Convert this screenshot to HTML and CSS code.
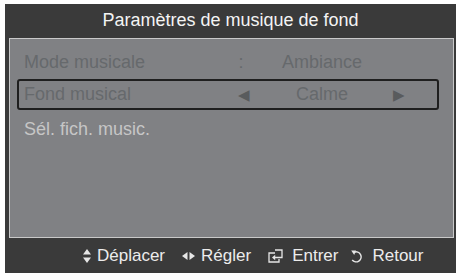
FILE: index.html
```html
<!DOCTYPE html>
<html lang="fr">
<head>
<meta charset="utf-8">
<link rel="stylesheet" href="styles.css">
</head>
<body>
<div class="osd">
  <div class="title">Paramètres de musique de fond</div>
  <div class="panel">
    <div class="row">
      <span class="label">Mode musicale</span>
      <span class="sep colon">:</span>
      <span class="value">Ambiance</span>
      <span class="sep"></span>
    </div>
    <div class="row selected">
      <span class="label">Fond musical</span>
      <span class="sep arrow">&#9664;</span>
      <span class="value">Calme</span>
      <span class="sep arrow">&#9654;</span>
    </div>
    <div class="row light">
      <span class="label">Sél. fich. music.</span>
    </div>
  </div>
  <div class="footer">
    <div class="item">
      <svg class="ic ic-move" width="8" height="16" viewBox="0 0 8 16"><path d="M4 1 L8 6.5 H0 Z M4 15 L8 9.5 H0 Z" fill="#e6e6e6"/></svg>
      <span>Déplacer</span>
    </div>
    <div class="item">
      <svg class="ic ic-adj" width="13" height="10" viewBox="0 0 13 10"><path d="M0 5 L5.5 1 V9 Z M13 5 L7.5 1 V9 Z" fill="#e6e6e6"/></svg>
      <span>Régler</span>
    </div>
    <div class="item">
      <svg class="ic ic-enter" width="15" height="14" viewBox="0 0 15 14"><path d="M7 4 H1 V13 H11 V10" fill="none" stroke="#e6e6e6" stroke-width="1.3"/><path d="M7 1 H14 V8.5 H6.5" fill="none" stroke="#e6e6e6" stroke-width="1.3"/><path d="M4 8.5 L7.2 5.8 V11.2 Z" fill="#e6e6e6"/></svg>
      <span>Entrer</span>
    </div>
    <div class="item">
      <svg class="ic ic-ret" width="12" height="14" viewBox="0 0 12 14"><path d="M4.2 3.2 A5 5 0 1 1 2.2 11" fill="none" stroke="#e6e6e6" stroke-width="1.5"/><path d="M1.2 1.5 L6 1.6 L4.2 6 Z" fill="#e6e6e6"/></svg>
      <span>Retour</span>
    </div>
  </div>
</div>
</body>
</html>
```
FILE: styles.css
```css
html, body {
  margin: 0;
  padding: 0;
  background: #ffffff;
}
body {
  font-family: "Liberation Sans", Arial, sans-serif;
}
.osd {
  margin: 4px 0 0 5px;
  width: 451px;
  height: 269px;
  background: #3a3a3a;
  display: flex;
  flex-direction: column;
}
.title {
  height: 34px;
  line-height: 33px;
  text-align: center;
  color: #f4f4f4;
  font-size: 18px;
}
.panel {
  margin: 0 2px 0 4px;
  height: 191px;
  background: #808184;
  border: 1px solid #c9c9c9;
  padding-top: 7px;
}
.row {
  box-sizing: border-box;
  display: grid;
  grid-template-columns: 207px 26px 130px 24px;
  align-items: center;
  height: 31px;
  margin: 1px 14px 1px 7px;
  padding-left: 5px;
  border: 2px solid transparent;
  border-radius: 3px;
  font-size: 18px;
  color: #66696c;
}
.row.selected {
  border-color: #1f1f1f;
}
.row.light {
  margin-top: 4px;
  color: #c6c6c6;
}
.sep {
  text-align: center;
}
.colon {
  padding-right: 6px;
}
.arrow {
  font-size: 15px;
  color: #595b5d;
}
.value {
  text-align: center;
}
.footer {
  flex: 1;
  display: flex;
  align-items: center;
  padding-left: 78px;
  color: #ececec;
  font-size: 17px;
}
.item {
  display: flex;
  align-items: center;
}
.ic-move { margin-right: 6px; }
.ic-adj { margin: 0 6px 0 17px; }
.ic-enter { margin: 0 9px 0 17px; }
.ic-ret { margin: 0 10px 0 12px; }
```
